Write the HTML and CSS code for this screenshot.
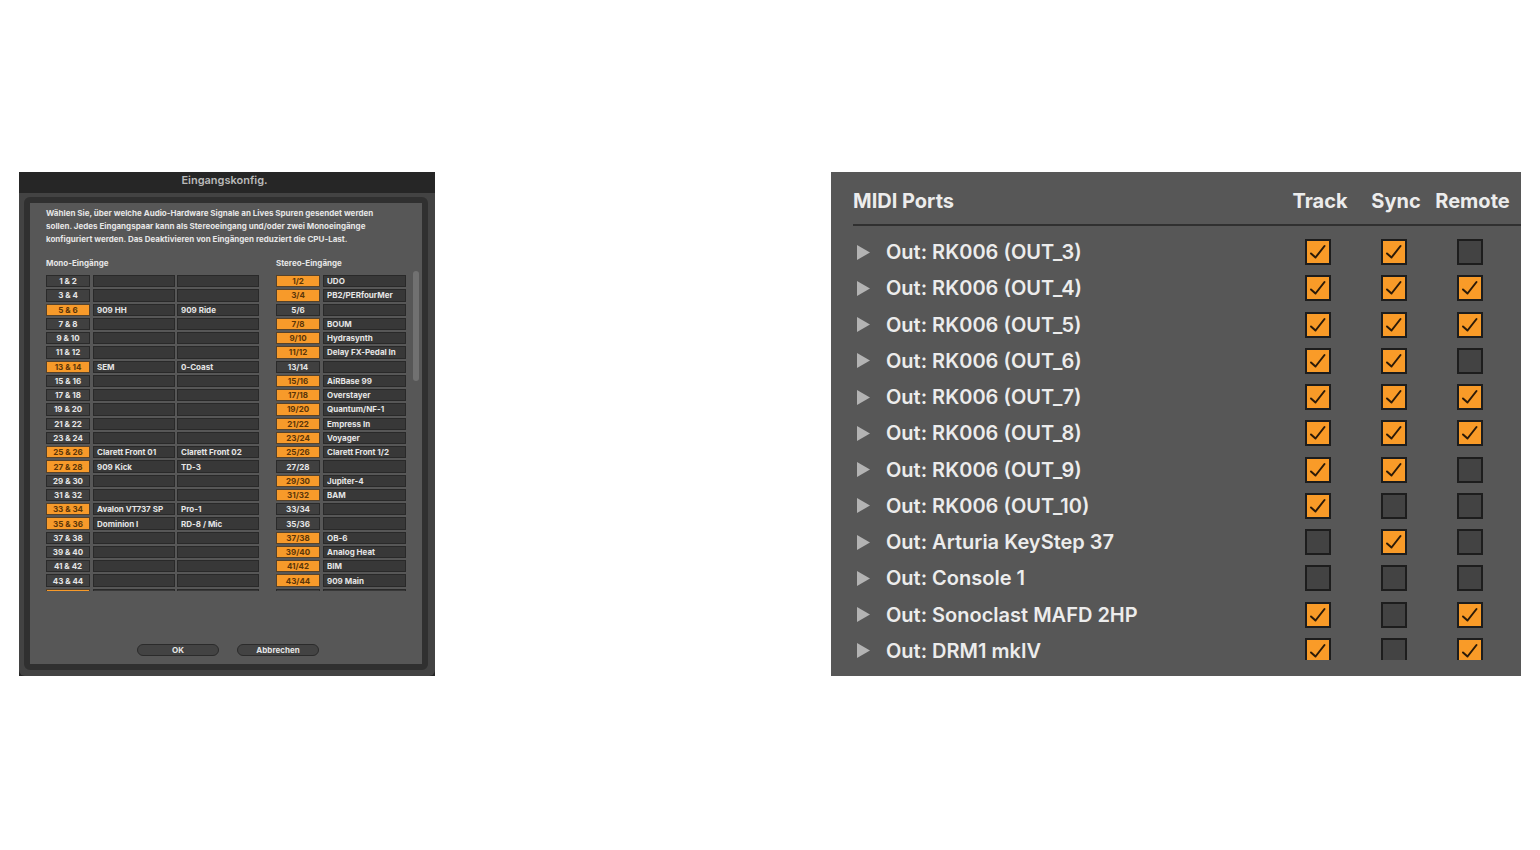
FILE: index.html
```html
<!DOCTYPE html>
<html lang="de">
<head>
    <meta charset="utf-8">
    <title>Eingangskonfig.</title>
    <link rel="stylesheet" href="styles.css">
</head>
<body>
    <main class="page">
        <section class="dialog">
            <h1 class="titlebar">Eingangskonfig.</h1>
            <div class="dialog-body">
                <form class="frame">
                    <p class="intro">
                        Wählen Sie, über welche Audio-Hardware Signale an Lives Spuren gesendet werden<br>
                        sollen. Jedes Eingangspaar kann als Stereoeingang und/oder zwei Monoeingänge<br>
                        konfiguriert werden. Das Deaktivieren von Eingängen reduziert die CPU-Last.
                    </p>
                    <div class="lists">
                        <div class="list mono">
                            <h2>Mono-Eingänge</h2>
                            <div class="clip"><div class="rows" id="mono"></div></div>
                        </div>
                        <div class="list stereo">
                            <h2>Stereo-Eingänge</h2>
                            <div class="clip"><div class="rows" id="stereo"></div></div>
                        </div>
                        <div class="scrollbar"></div>
                    </div>
                    <div class="actions">
                        <button type="button">OK</button>
                        <button type="button">Abbrechen</button>
                    </div>
                </form>
            </div>
        </section>

        <section class="midi">
            <table class="ports">
                <thead>
                    <tr>
                        <th>MIDI Ports</th>
                        <th>Track</th>
                        <th>Sync</th>
                        <th>Remote</th>
                    </tr>
                </thead>
                <tbody id="ports"></tbody>
            </table>
        </section>
    </main>
    <script src="script.js"></script>
</body>
</html>
```
FILE: styles.css
```css
* {
    box-sizing: border-box;
}

body {
    margin: 0;
    background-color: white;
    font-family: Inter, "Liberation Sans", sans-serif;
}

button, input {
    font: inherit;
    color: inherit;
    margin: 0;
    padding: 0;
}

h1, h2, p {
    margin: 0;
}

.page {
    display: grid;
    grid-template-columns: 416fr 690fr;
    column-gap: 396px;
    padding: 172px 19px;
}

/* input config dialog */
.dialog {
    display: flex;
    flex-direction: column;
    background-color: #262626;
    color: #e6e6e6;
    font-size: 8px;
    font-weight: 700;
}

.titlebar {
    height: 21px;
    padding-right: 5px;
    font-size: 11px;
    line-height: 16px;
    font-weight: 600;
    text-align: center;
    color: #b9b9b9;
}

.dialog-body {
    background-color: #434343;
    border-radius: 0 0 6px 6px;
    padding: 4px 7px 6px 5px;
}

.frame {
    background-color: #575757;
    border: 6px solid #303030;
    border-radius: 6px;
    padding: 4px 3px 8px 16px;
}

.intro {
    line-height: 13px;
    white-space: nowrap;
}

.lists {
    display: flex;
    margin-top: 11px;
}

.list h2 {
    font-size: 8px;
    line-height: 12px;
    font-weight: 700;
    margin-bottom: 6px;
}

.mono {
    flex: 213;
    min-width: 0;
    margin-right: 17px;
}

.stereo {
    flex: 130;
    min-width: 0;
}

.clip {
    height: 316px;
    overflow: hidden;
}

.rows {
    display: grid;
    grid-auto-rows: 1fr;
    gap: 2px;
    height: 326px;
}

.row {
    display: flex;
    gap: 2px;
    min-height: 0;
}

.toggle {
    flex: 0 0 44px;
    margin-right: 1px;
    border: 1px solid #2a2a2a;
    background-color: #404040;
    line-height: 10px;
    text-align: center;
}

.toggle.on {
    border-color: #56422a;
    background-color: #f79a2a;
    color: #5a3508;
}

.field {
    flex: 1;
    width: 0;
    min-width: 0;
    border: 1px solid #292929;
    border-radius: 0;
    background-color: #383838;
    padding-left: 3px;
    line-height: 10px;
}

.scrollbar {
    width: 6px;
    height: 110px;
    margin: 14px 0 0 7px;
    border-radius: 3px;
    background-color: #717171;
}

.actions {
    display: flex;
    justify-content: center;
    gap: 18px;
    margin-top: 53px;
    padding-right: 9px;
}

.actions button {
    width: 82px;
    height: 12px;
    border: 1px solid #2b2b2b;
    border-radius: 6px;
    background-color: #434343;
    line-height: 10px;
}

/* midi ports */
.midi {
    background-color: #575757;
    color: #ececec;
    padding-left: 22px;
}

.ports, .ports thead {
    display: block;
}

.ports tr {
    display: grid;
    grid-template-columns: 1fr 76px 76px 87px;
    align-items: center;
}

.ports thead tr {
    height: 54px;
    padding-top: 6px;
    border-bottom: 2px solid #303030;
}

.ports tbody {
    display: grid;
    grid-auto-rows: 1fr;
    height: 435px;
    margin-top: 8px;
}

.ports th {
    padding: 0;
    font-size: 20px;
    font-weight: 700;
    white-space: nowrap;
}

.ports th:first-child {
    text-align: left;
}

.ports td {
    padding: 0 5px 0 0;
}

.ports th:last-child {
    padding-right: 10px;
}

.ports td:last-child {
    padding-right: 15px;
}

.ports .port {
    display: flex;
    align-items: center;
    gap: 16px;
    padding-left: 4px;
    font-size: 20px;
    font-weight: 600;
    line-height: 26px;
    white-space: nowrap;
}

.fold {
    display: flex;
    border: 0;
    background: none;
}

.fold svg {
    width: 13px;
    height: 15px;
    fill: #b3b3b3;
}

.check {
    display: grid;
    justify-content: center;
}

/* last row runs out of the scroll area */
.ports tbody tr:last-child .check {
    clip-path: inset(0 0 4px);
}

.check input, .check svg {
    grid-area: 1 / 1;
    width: 26px;
    height: 26px;
}

.check input {
    appearance: none;
    border: 2px solid #1d1d1d;
    background-color: #434343;
}

.check input:checked {
    background-color: #f99b28;
}

.check svg {
    display: none;
    fill: none;
    stroke: #2b1a08;
    stroke-width: 2;
    stroke-linecap: round;
    stroke-linejoin: round;
    pointer-events: none;
}

.check input:checked + svg {
    display: block;
}
```
FILE: script.js
```js
// first number of the pair -> names, listed pairs are active
const monoNames = {
    5: ["909 HH", "909 Ride"],
    13: ["SEM", "0-Coast"],
    25: ["Clarett Front 01", "Clarett Front 02"],
    27: ["909 Kick", "TD-3"],
    33: ["Avalon VT737 SP", "Pro-1"],
    35: ["Dominion I", "RD-8 / Mic"],
    45: ["", ""]
};

const stereoNames = {
    1: ["UDO"],
    3: ["PB2/PERfourMer"],
    7: ["BOUM"],
    9: ["Hydrasynth"],
    11: ["Delay FX-Pedal In"],
    15: ["AiRBase 99"],
    17: ["Overstayer"],
    19: ["Quantum/NF-1"],
    21: ["Empress In"],
    23: ["Voyager"],
    25: ["Clarett Front 1/2"],
    29: ["Jupiter-4"],
    31: ["BAM"],
    37: ["OB-6"],
    39: ["Analog Heat"],
    41: ["BIM"],
    43: ["909 Main"]
};

const lastPair = 43;

const ports = [
    ["RK006 (OUT_3)", 1, 1, 0],
    ["RK006 (OUT_4)", 1, 1, 1],
    ["RK006 (OUT_5)", 1, 1, 1],
    ["RK006 (OUT_6)", 1, 1, 0],
    ["RK006 (OUT_7)", 1, 1, 1],
    ["RK006 (OUT_8)", 1, 1, 1],
    ["RK006 (OUT_9)", 1, 1, 0],
    ["RK006 (OUT_10)", 1, 0, 0],
    ["Arturia KeyStep 37", 0, 1, 0],
    ["Console 1", 0, 0, 0],
    ["Sonoclast MAFD 2HP", 1, 0, 1],
    ["DRM1 mkIV", 1, 0, 1]
];

function fillRows(id, names, separator, fieldCount) {
    let html = "";
    // one more row than fits, only its top edge shows
    for (let n = 1; n <= lastPair + 2; n += 2) {
        const label = n + separator + (n + 1);
        const on = names[n] ? " on" : "";
        html += `<div class="row"><button type="button" class="toggle${on}" aria-label="${label}">${n <= lastPair ? label : ""}</button>`;
        for (let i = 0; i < fieldCount; i++) {
            const value = names[n] ? names[n][i] : "";
            html += `<input type="text" class="field" aria-label="Name ${label}" value="${value}">`;
        }
        html += "</div>";
    }
    document.getElementById(id).innerHTML = html;
}

function fillPorts() {
    const columns = ["Track", "Sync", "Remote"];
    let html = "";
    ports.forEach(([name, ...states]) => {
        html += `<tr><td class="port">
            <button type="button" class="fold" aria-label="${name}"><svg viewBox="0 0 13 15"><path d="M0 0 L13 7.5 L0 15 Z"/></svg></button>
            <span>Out: ${name}</span></td>`;
        states.forEach((state, i) => {
            html += `<td><label class="check">
                <input type="checkbox" aria-label="${name} ${columns[i]}"${state ? " checked" : ""}>
                <svg viewBox="0 0 26 26"><path d="M6 14.5 L10.5 18.5 L19.5 7"/></svg>
            </label></td>`;
        });
        html += "</tr>";
    });
    document.getElementById("ports").innerHTML = html;
}

fillRows("mono", monoNames, " & ", 2);
fillRows("stereo", stereoNames, "/", 1);
fillPorts();
```
